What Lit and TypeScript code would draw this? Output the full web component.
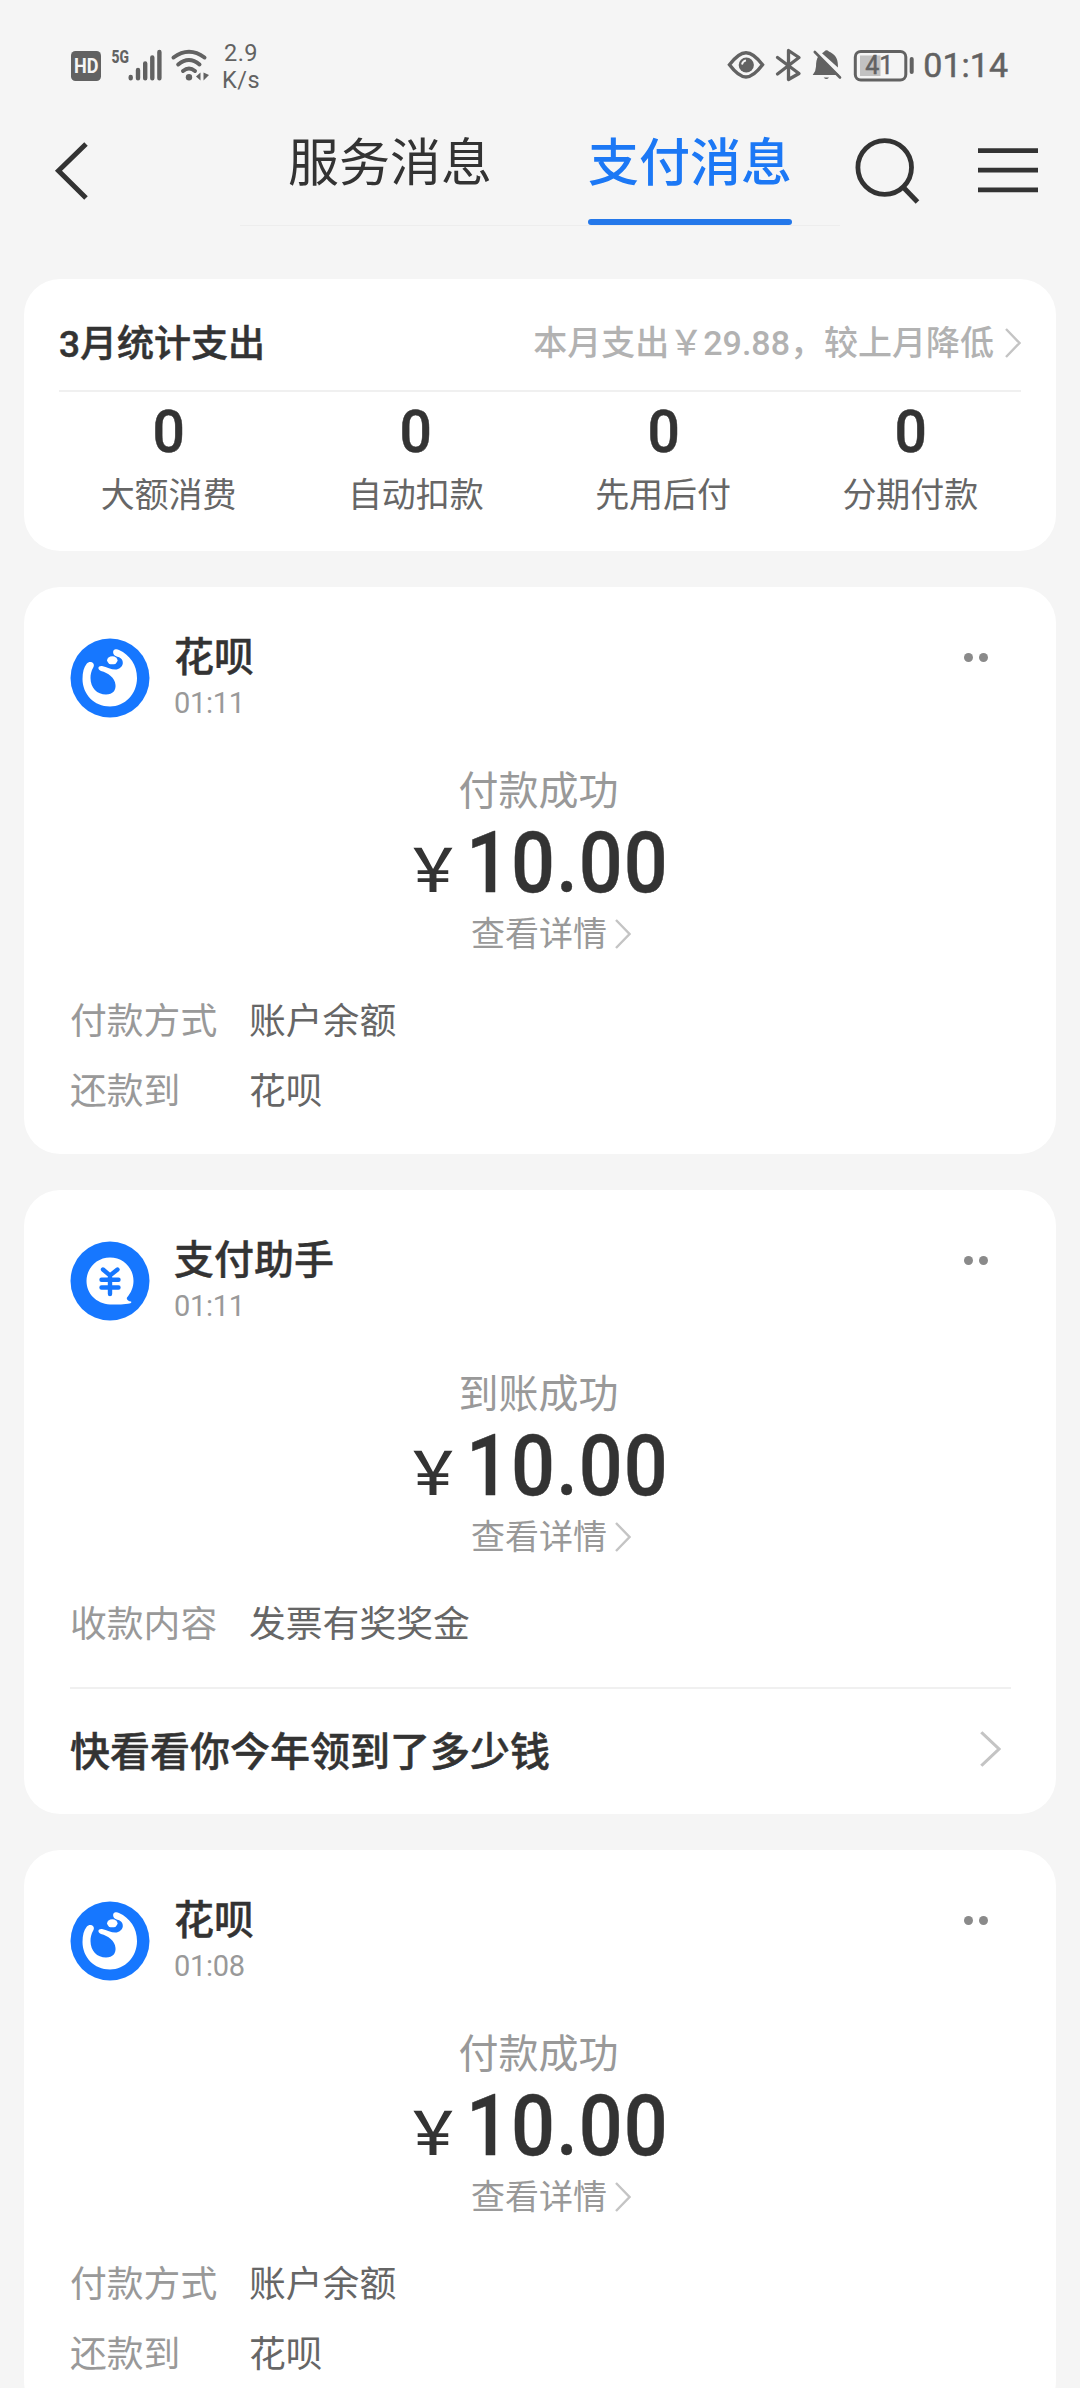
import { LitElement, html, css, nothing } from "lit";
import { customElement, property } from "lit/decorators.js";

type Detail = { label: string; value: string };
type Message = {
  kind: "huabei" | "assistant";
  name: string;
  time: string;
  status: string;
  amount: string;
  details: Detail[];
  link?: string;
};

const STATS = ["大额消费", "自动扣款", "先用后付", "分期付款"];

const PAYMENT: Detail[] = [
  { label: "付款方式", value: "账户余额" },
  { label: "还款到", value: "花呗" },
];

const MESSAGES: Message[] = [
  { kind: "huabei", name: "花呗", time: "01:11", status: "付款成功", amount: "10.00", details: PAYMENT },
  {
    kind: "assistant",
    name: "支付助手",
    time: "01:11",
    status: "到账成功",
    amount: "10.00",
    details: [{ label: "收款内容", value: "发票有奖奖金" }],
    link: "快看看你今年领到了多少钱",
  },
  { kind: "huabei", name: "花呗", time: "01:08", status: "付款成功", amount: "10.00", details: PAYMENT },
];

@customElement("status-bar")
class StatusBar extends LitElement {
  static styles = css`
    :host { display: block; height: 120px; }
    .bar {
      display: flex; justify-content: space-between; align-items: flex-start;
      height: 120px; box-sizing: border-box; padding: 40px 72px 0 70px; color: #626262;
    }
    .side { display: flex; align-items: flex-start; }
    svg { display: block; overflow: visible; }
    .speed {
      width: 50px; margin-left: 6px; text-align: center;
      font: 400 23.5px/27px Roboto, sans-serif; letter-spacing: 0.5px;
    }
    .clock { font: 400 34px/51px Roboto, sans-serif; -webkit-text-stroke: 0.5px #626262; }
    .label { font-family: Roboto, sans-serif; fill: currentColor; }
    .knockout { fill: #f5f5f5; }
  `;
  render() {
    return html`<div class="bar">
      <div class="side">
        <svg width="140" height="50" viewBox="70 40 140 50" fill="currentColor">
          <rect x="71" y="51" width="30" height="30" rx="4.5" />
          <text class="label knockout" x="74" y="73" font-size="19.5" font-weight="700" textLength="24.500" lengthAdjust="spacingAndGlyphs">HD</text>
          <text class="label" x="111.5" y="63" font-size="19" font-weight="800" textLength="17.5" lengthAdjust="spacingAndGlyphs">5G</text>
          <g stroke="currentColor" stroke-width="4.4" stroke-linecap="round">
            <path d="M130.7 77v1.2M138 70v8.2M145.2 63.5v14.7M152.3 57.5v20.7M159.4 52v26.2" />
          </g>
          <g stroke="currentColor" stroke-width="4" fill="none" stroke-linecap="round">
            <path d="M173.5 57.5Q189 46 204.500 57.500M178.200 64.500Q189 55.500 199.500 64.500M183 71Q189 66 195 71" />
          </g>
          <circle cx="189" cy="77.300" r="3.200" />
          <path d="M200.500 72.500v8l-4.500-4zM203.500 72.500v8l5.500-5.500z" />
        </svg>
        <div class="speed">2.9<br />K/s</div>
      </div>
      <div class="side">
        <svg width="197" height="50" viewBox="727 40 197 50" fill="none" stroke="currentColor">
          <path d="M730.500 64.800C737 56 742 52.700 747 52.700S757 56 763.500 64.800C757 73.500 752 77 747 77S737 73.500 730.500 64.800Z" stroke-width="3.500" />
          <circle cx="747.300" cy="65" r="7.600" fill="currentColor" stroke="none" />
          <path d="M743 64.500q.5-3.500 4-4.200" stroke="#f5f5f5" stroke-width="1.800" />
          <path d="M778.500 57.500L800 73.500L789.500 79.500V50.500L800 57.500L778.500 74" stroke-width="3.300" stroke-linejoin="round" stroke-linecap="round" />
          <g stroke="none" fill="currentColor">
            <path d="M819.500 56L840 75H813.700q3.300-4 3.300-8.500c0-4.500.5-7.500 2.500-10.500z" />
            <path d="M823 53.300q1.700-1 2.300-1.800q2.200-2.500 4.600 0c5.600 2.400 9 6.500 9 13.500v2.500z" />
            <path d="M824.700 77.500h5.300q-2.600 3.200-5.300 0z" />
          </g>
          <path d="M815.800 52L841 77.500" stroke-width="2.600" stroke-linecap="round" />
          <rect x="856.300" y="51.500" width="50.500" height="28.500" rx="5.500" stroke-width="3" />
          <rect x="861" y="55.500" width="20.500" height="20.500" fill="#c2c2c2" stroke="none" />
          <path d="M912.700 59v13" stroke-width="4" stroke-linecap="round" />
          <text class="label" x="866.300" y="74" font-size="25" stroke-width=".5">41</text>
        </svg>
        <div class="clock">01:14</div>
      </div>
    </div>`;
  }
}

@customElement("nav-header")
class NavHeader extends LitElement {
  static styles = css`
    :host { display: block; }
    .nav { display: flex; height: 106px; padding-right: 42px; }
    svg { display: block; flex: none; }
    .tabs {
      display: flex; width: 600px; height: 106px; box-sizing: border-box; padding-left: 48px; gap: 96px;
      border-bottom: 1px solid #ededed;
    }
    .tab {
      display: flex; flex-direction: column; justify-content: space-between;
      box-sizing: border-box; width: 204px; height: 105px; padding-top: 7px;
      font: 400 51px/74px Roboto, "Noto Sans CJK SC", sans-serif; color: #333; white-space: nowrap;
    }
    .active { color: #1c78f5; font-weight: 500; }
    .line { height: 6px; border-radius: 3px; background: #2478ea; }
    .actions { margin-left: -48px; }
  `;
  render() {
    return html`<div class="nav">
      <svg width="240" height="106" viewBox="0 120 240 106" fill="none" stroke="#333" stroke-width="5">
        <path d="M86 144L58.500 170.700L86 198" />
      </svg>
      <div class="tabs">
        <div class="tab">服务消息</div>
        <div class="tab active">支付消息<div class="line"></div></div>
      </div>
      <svg class="actions" width="246" height="106" viewBox="792 120 246 106" fill="none" stroke="#333" stroke-width="4.800">
        <circle cx="884.700" cy="167.500" r="26.800" />
        <path d="M904 188L917.500 202" stroke-width="5" />
        <path d="M978 150.700h60M978 170.200h60M978 189.800h60" />
      </svg>
    </div>`;
  }
}

@customElement("chevron-icon")
class ChevronIcon extends LitElement {
  @property({ type: Number }) width = 16;
  @property({ type: Number }) height = 30;
  static styles = css`
    :host { display: block; flex: none; }
    svg { display: block; }
  `;
  render() {
    return html`<svg width=${this.width} height=${this.height} viewBox="0 0 16 30" preserveAspectRatio="none" fill="none" stroke="#c4c4c4" stroke-width="2.400">
      <path d="M1 1L14.500 15L1 29" />
    </svg>`;
  }
}

@customElement("summary-card")
class SummaryCard extends LitElement {
  static styles = css`
    :host { display: block; }
    .card {
      height: 272px; box-sizing: border-box; background: #fff; border-radius: 36px; padding: 0 35px 0 35px;
      font-family: Roboto, "Noto Sans CJK SC", sans-serif;
    }
    .head {
      display: flex; align-items: center; height: 113px; box-sizing: border-box; padding-top: 16px;
      border-bottom: 2px solid #f0f0f0; white-space: nowrap;
    }
    .title { flex: 1; font-size: 37px; font-weight: 500; color: #333; padding-bottom: 4px; -webkit-text-stroke: 0.5px #333; }
    .note { font-size: 34px; font-weight: 500; color: #b2b2b2; margin-right: 11px; padding-bottom: 4px; }
    .stats { display: grid; grid-template-columns: repeat(4, 1fr); margin: 0 -13px 0 -14px; }
    .stat { text-align: center; color: #666; font-size: 34px; line-height: 50px; }
    .count { height: 73px; padding-top: 5px; font-size: 60px; line-height: 70px; font-weight: 500; color: #333; -webkit-text-stroke: 0.5px #333; transform: scaleX(0.95); }
  `;
  render() {
    return html`<div class="card">
      <div class="head">
        <div class="title">3月统计支出</div>
        <div class="note">本月支出￥29.88，较上月降低</div>
        <chevron-icon></chevron-icon>
      </div>
      <div class="stats">
        ${STATS.map((s) => html`<div class="stat"><div class="count">0</div>${s}</div>`)}
      </div>
    </div>`;
  }
}

@customElement("message-card")
class MessageCard extends LitElement {
  @property({ attribute: false }) message!: Message;
  static styles = css`
    :host { display: block; }
    .card {
      background: #fff; border-radius: 36px; padding: 44px 46px 0; display: flow-root;
      font-family: Roboto, "Noto Sans CJK SC", sans-serif; white-space: nowrap;
    }
    .head { display: flex; height: 80px; padding-top: 7px; }
    .head svg { display: block; }
    .who { flex: 1; margin: -8px 0 0 24px; }
    .name { font-size: 40px; line-height: 55px; font-weight: 500; color: #333; -webkit-text-stroke: 0.4px #333; }
    .time { font-size: 29px; line-height: 36px; font-weight: 400; color: #999; letter-spacing: -0.3px; }
    .dots { display: flex; gap: 6px; margin: 15px 22px 0 0; }
    .dot { width: 9px; height: 9px; border-radius: 50%; background: #8a8a8a; }
    .body { display: flex; flex-direction: column; align-items: center; padding-top: 45px; }
    .status { font-size: 40px; line-height: 58px; color: #999; margin-left: -3px; }
    .sum { display: flex; align-items: baseline; height: 89px; margin-top: -1px; color: #333; margin-left: -15px; }
    .yen { width: 63px; font-size: 60px; line-height: 86px; font-weight: 500; }
    .figure { font-size: 86px; line-height: 86px; font-weight: 500; width: 196px; -webkit-text-stroke: 0.4px #333; }
    .squeeze { display: inline-block; transform: scaleX(0.9); transform-origin: 0 50%; letter-spacing: 1.2px; }
    .more { display: flex; align-items: center; gap: 8px; height: 50px; font-size: 34px; line-height: 50px; color: #999; padding-left: 22px; }
    .details { padding: 28px 0 27px; font-size: 36.800px; line-height: 70px; }
    .row { display: flex; height: 70px; }
    .key { width: 179px; color: #999; }
    .value { color: #666; }
    .link {
      display: flex; align-items: center; justify-content: space-between; height: 120px; border-top: 2px solid #f0f0f0;
      font-size: 40px; font-weight: 500; color: #333; padding: 0 10px 5px 0; margin-right: -1px; -webkit-text-stroke: 0.5px #333;
    }
  `;
  icon() {
    return this.message.kind === "huabei"
      ? html`<svg width="80" height="80" viewBox="0 0 80 80">
          <circle cx="40" cy="40" r="39.500" fill="#1677ff" />
          <path fill="#fff" d="M43.500 16C42 11.500 46 10.500 49 12C60 17 67 27 67 40C67 56 55 68.500 40 68.500C24 68.500 12.500 56 12.500 41C12.500 34 14 29 16.500 26C20 22 25.500 25 23.500 29C21 33 20.500 37 20.500 40C20.500 50 27 56.500 36 56.500C43 56.500 46 52 45.500 47C45 39.500 38 35 31 33C27 31 28 27.500 32 28C38 29.500 44 33 48 31C53 29 54 24.500 51.500 21C49.500 18.500 45 19 43.500 16Z" />
          <ellipse cx="42.300" cy="22.300" rx="5.200" ry="4" fill="#fff" />
        </svg>`
      : html`<svg width="80" height="80" viewBox="0 0 80 80">
          <circle cx="40" cy="40" r="39.500" fill="#1677ff" />
          <path fill="#fff" d="M40 16.500C53.500 16.500 63.500 27 63.500 40C63.500 46 61 52 57 56.500C56 58.500 58.500 60 61 60.500C62 61.500 60.500 62.500 58 62.700Q49 63.800 40 63.500C26 62.500 16.500 52.500 16.500 40S26.500 16.500 40 16.500Z" />
          <path fill="none" stroke="#1677ff" stroke-width="4.400" stroke-linecap="round" d="M33 28.500L40 34.500L47.500 28.500M31.500 38.800H48.500M31.500 46.500H48.500M40 36V53" />
        </svg>`;
  }
  render() {
    const m = this.message;
    return html`<div class="card">
      <div class="head">
        ${this.icon()}
        <div class="who">
          <div class="name">${m.name}</div>
          <div class="time">${m.time}</div>
        </div>
        <div class="dots"><div class="dot"></div><div class="dot"></div></div>
      </div>
      <div class="body">
        <div class="status">${m.status}</div>
        <div class="sum"><span class="yen">￥</span><span class="figure"><span class="squeeze">${m.amount}</span></span></div>
        <div class="more">查看详情<chevron-icon></chevron-icon></div>
      </div>
      <div class="details">
        ${m.details.map((d) => html`<div class="row"><div class="key">${d.label}</div><div class="value">${d.value}</div></div>`)}
      </div>
      ${m.link
        ? html`<div class="link">${m.link}<chevron-icon .width=${21} .height=${36}></chevron-icon></div>`
        : nothing}
    </div>`;
  }
}

@customElement("app-root")
class AppRoot extends LitElement {
  static styles = css`
    :host { display: block; height: 2388px; overflow: hidden; background: #f5f5f5; }
    .feed { display: flex; flex-direction: column; gap: 36px; padding: 53px 24px 0; }
  `;
  render() {
    return html`<status-bar></status-bar>
      <nav-header></nav-header>
      <main class="feed">
        <summary-card></summary-card>
        ${MESSAGES.map((m) => html`<message-card .message=${m}></message-card>`)}
      </main>`;
  }
}
